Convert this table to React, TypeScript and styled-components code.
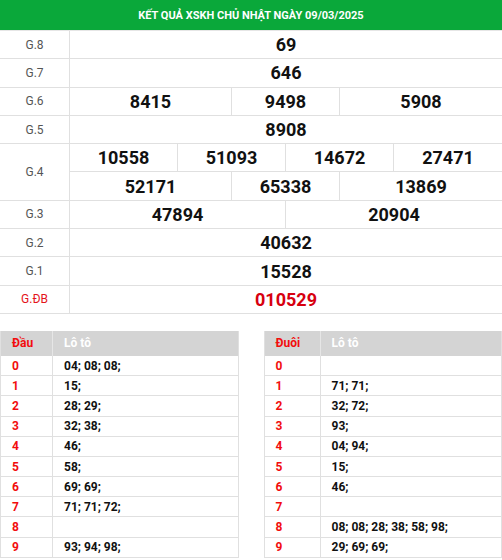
import React from "react";
import styled, { createGlobalStyle } from "styled-components";

const Global = createGlobalStyle`
  html, body { margin: 0; padding: 0; background: #fff; }
  body { font-family: Roboto, "Liberation Sans", Arial, sans-serif; }
  * { box-sizing: border-box; }
`;

const Page = styled.div`
  width: 502px;
`;

const Title = styled.div`
  height: 31px;
  background: #0aa83a;
  color: #fff;
  font-weight: 700;
  font-size: 11px;
  line-height: 31px;
  text-align: center;
  text-transform: uppercase;
  border-bottom: 1px solid #e6e6e6;
`;

const Results = styled.div`
  display: grid;
  grid-template-columns: 70px repeat(8, 1fr);
  grid-auto-rows: 28.3px;
`;

const Label = styled.div<{ $span?: number; $red?: boolean }>`
  grid-column: 1;
  grid-row: span ${(p) => p.$span ?? 1};
  display: flex;
  align-items: center;
  justify-content: center;
  font-size: 12px;
  color: ${(p) => (p.$red ? "#e4141b" : "#555")};
  border-right: 1px solid #e0e0e0;
  border-bottom: 1px solid #e0e0e0;
`;

const Num = styled.div<{ $span: number; $red?: boolean; $last?: boolean }>`
  grid-column: span ${(p) => p.$span};
  display: flex;
  align-items: center;
  justify-content: center;
  font-size: 18px;
  font-weight: 700;
  color: ${(p) => (p.$red ? "#d7000f" : "#111")};
  border-bottom: 1px solid #e0e0e0;
  border-right: ${(p) => (p.$last ? "none" : "1px solid #e0e0e0")};
`;

const Loto = styled.div`
  display: grid;
  grid-template-columns: 1fr 1fr;
  column-gap: 25px;
  margin-top: 17px;
`;

const LTable = styled.div<{ $first: number }>`
  display: grid;
  grid-template-columns: ${(p) => p.$first}px 1fr;
  grid-template-rows: 25px;
  grid-auto-rows: 20.2px;
  border-left: 1px solid #e0e0e0;
  border-right: 1px solid #e0e0e0;
  font-size: 12px;
  font-weight: 700;
`;

const HeadCell = styled.div<{ $red?: boolean; $first?: boolean }>`
  background: #d4d4d4;
  color: ${(p) => (p.$red ? "#f20d0d" : "#fff")};
  display: flex;
  align-items: center;
  padding-left: 11px;
  border-right: ${(p) => (p.$first ? "1px solid #e6e6e6" : "none")};
`;

const Cell = styled.div<{ $red?: boolean; $first?: boolean }>`
  display: flex;
  align-items: center;
  padding-left: 11px;
  color: ${(p) => (p.$red ? "#f20d0d" : "#111")};
  border-bottom: 1px solid #e0e0e0;
  border-right: ${(p) => (p.$first ? "1px solid #e0e0e0" : "none")};
`;

type Row = { label: string; red?: boolean; cells: [string, number][] };

const rows: Row[] = [
  { label: "G.8", cells: [["69", 8]] },
  { label: "G.7", cells: [["646", 8]] },
  { label: "G.6", cells: [["8415", 3], ["9498", 2], ["5908", 3]] },
  { label: "G.5", cells: [["8908", 8]] },
];

const dau = ["04; 08; 08;", "15;", "28; 29;", "32; 38;", "46;", "58;", "69; 69;", "71; 71; 72;", "", "93; 94; 98;"];
const duoi = ["", "71; 71;", "32; 72;", "93;", "04; 94;", "15;", "46;", "", "08; 08; 28; 38; 58; 98;", "29; 69; 69;"];

const renderCells = (cells: [string, number][], red?: boolean) =>
  cells.map(([v, s], i) => (
    <Num key={v + i} $span={s} $red={red} $last={i === cells.length - 1}>
      {v}
    </Num>
  ));

const LotoTable = ({ head, data, first }: { head: string; data: string[]; first: number }) => (
  <LTable $first={first}>
    <HeadCell $red $first>{head}</HeadCell>
    <HeadCell>Lô tô</HeadCell>
    {data.map((d, i) => (
      <React.Fragment key={i}>
        <Cell $red $first>{i}</Cell>
        <Cell>{d}</Cell>
      </React.Fragment>
    ))}
  </LTable>
);

export default function App() {
  return (
    <Page>
      <Global />
      <Title>Kết quả XSKH Chủ Nhật ngày 09/03/2025</Title>
      <Results>
        {rows.map((r) => (
          <React.Fragment key={r.label}>
            <Label>{r.label}</Label>
            {renderCells(r.cells)}
          </React.Fragment>
        ))}
        <Label $span={2}>G.4</Label>
        {renderCells([["10558", 2], ["51093", 2], ["14672", 2], ["27471", 2]])}
        {renderCells([["52171", 3], ["65338", 2], ["13869", 3]])}
        <Label>G.3</Label>
        {renderCells([["47894", 4], ["20904", 4]])}
        <Label>G.2</Label>
        {renderCells([["40632", 8]])}
        <Label>G.1</Label>
        {renderCells([["15528", 8]])}
        <Label $red>G.ĐB</Label>
        {renderCells([["010529", 8]], true)}
      </Results>
      <Loto>
        <LotoTable head="Đầu" data={dau} first={52} />
        <LotoTable head="Đuôi" data={duoi} first={56} />
      </Loto>
    </Page>
  );
}
